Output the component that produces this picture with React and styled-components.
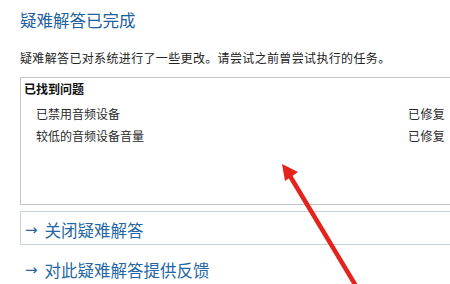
import React from "react";
import styled, { createGlobalStyle } from "styled-components";

const Global = createGlobalStyle`
  html, body { margin: 0; padding: 0; background: #fff; overflow: hidden; }
  body { font-family: "Microsoft YaHei", "Noto Sans CJK SC", "Noto Sans", sans-serif; }
`;

const Page = styled.div`
  position: relative;
  width: 450px;
  height: 284px;
  overflow: hidden;
  padding: 9px 0 0 20px;
  box-sizing: border-box;
  background: #fff;
`;

const Title = styled.h1`
  margin: 0;
  font-size: 16.5px;
  line-height: 22px;
  font-weight: 400;
  color: #21609e;
`;

const Description = styled.p`
  margin: 18px 0 0;
  font-size: 12px;
  line-height: 18px;
  letter-spacing: 0.35px;
  color: #222;
`;

const ResultBox = styled.section`
  margin: 10px -20px 0 0;
  height: 128px;
  box-sizing: border-box;
  border: 1px solid #c4c4c4;
  border-right: none;
  padding: 2px 0 0 3px;
`;

const BoxHeader = styled.div`
  font-size: 12px;
  line-height: 18px;
  font-weight: 700;
  color: #111;
`;

const Rows = styled.div`
  display: flex;
  flex-direction: column;
  padding: 5px 25px 0 12px;
`;

const Row = styled.div`
  display: flex;
  justify-content: space-between;
  font-size: 12px;
  line-height: 22px;
  color: #2a2a2a;
`;

const Status = styled.span`
  letter-spacing: 0.3px;
`;

const LinkBox = styled.div`
  margin: ${(p) => (p.$boxed ? "6px -20px 0 0" : "14px 0 0")};
  height: ${(p) => (p.$boxed ? "34px" : "22px")};
  box-sizing: border-box;
  border: ${(p) => (p.$boxed ? "1px solid #c9d0d6" : "none")};
  border-right: none;
  display: flex;
  align-items: center;
  padding: ${(p) => (p.$boxed ? "3px 0 0 4px" : "0 0 0 5px")};
  gap: 7px;
  font-size: 16.5px;
  line-height: 22px;
  color: #2566a5;
`;

const Arrow = styled.span`
  font-family: "DejaVu Sans", sans-serif;
  font-size: 15px;
`;

const Annotation = styled.svg`
  position: absolute;
  left: 0;
  top: 0;
  pointer-events: none;
`;

export default function App() {
  return (
    <>
      <Global />
      <Page>
        <Title>疑难解答已完成</Title>
        <Description>疑难解答已对系统进行了一些更改。请尝试之前曾尝试执行的任务。</Description>
        <ResultBox>
          <BoxHeader>已找到问题</BoxHeader>
          <Rows>
            <Row>
              <span>已禁用音频设备</span>
              <Status>已修复</Status>
            </Row>
            <Row>
              <span>较低的音频设备音量</span>
              <Status>已修复</Status>
            </Row>
          </Rows>
        </ResultBox>
        <LinkBox $boxed>
          <Arrow>→</Arrow>
          <span>关闭疑难解答</span>
        </LinkBox>
        <LinkBox>
          <Arrow>→</Arrow>
          <span>对此疑难解答提供反馈</span>
        </LinkBox>
        <Annotation width="450" height="284" viewBox="0 0 450 284">
          <line x1="290" y1="176" x2="356" y2="286" stroke="#e4231c" strokeWidth="4.5" strokeLinecap="round" />
          <polygon points="282,164 298,172 285,181" fill="#e4231c" />
        </Annotation>
      </Page>
    </>
  );
}
